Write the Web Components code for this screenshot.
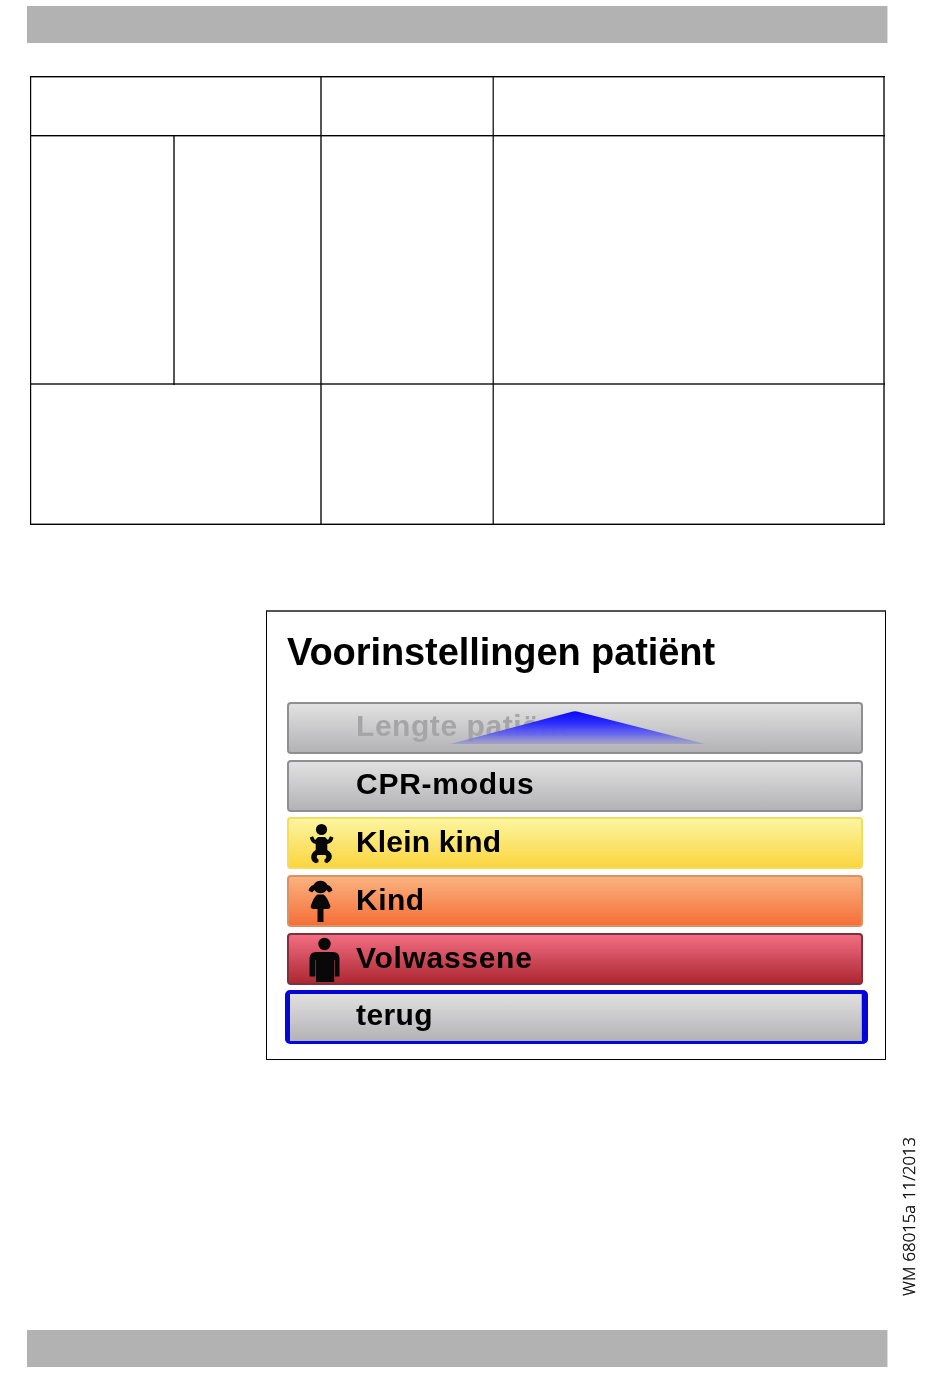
<!DOCTYPE html>
<html lang="nl">
<head>
<meta charset="utf-8">
<title>Voorinstellingen patiënt</title>
<style>
html,body{margin:0;background:#fff}
body{width:950px;height:1381px;overflow:hidden;font-family:"Liberation Sans",Arial,sans-serif;color:#000}
</style>
</head>
<body>
<manual-page>
  <page-band slot="header"></page-band>
  <ruled-table></ruled-table>
  <device-screen slot="screen" heading="Voorinstellingen patiënt">
    <menu-item tone="grey" disabled style="--track:.55px"><span>Lengte patiënt</span><scroll-arrow slot="overlay"></scroll-arrow></menu-item>
    <menu-item tone="grey" style="--track:.75px"><span>CPR-modus</span></menu-item>
    <menu-item tone="yellow" style="margin-top:-1px;--track:.18px;--shift:-1px"><person-icon slot="icon" kind="infant"></person-icon><span>Klein kind</span></menu-item>
    <menu-item tone="orange" style="--track:.5px;--shift:-1px"><person-icon slot="icon" kind="child"></person-icon><span>Kind</span></menu-item>
    <menu-item tone="red" style="--track:.7px;--shift:-1px"><person-icon slot="icon" kind="adult"></person-icon><span>Volwassene</span></menu-item>
    <menu-item tone="grey" selected style="--track:.4px"><span>terug</span></menu-item>
  </device-screen>
  <doc-code slot="code">WM 68015a 11/2013</doc-code>
  <page-band slot="footer"></page-band>
</manual-page>
<script>
const define = (name, html, setup) => {
  const template = document.createElement('template');
  template.innerHTML = html;
  customElements.define(name, class extends HTMLElement {
    constructor() {
      super();
      this.attachShadow({mode: 'open'}).append(template.content.cloneNode(true));
      if (setup) setup(this, this.shadowRoot);
    }
  });
};

define('manual-page', `<style>
:host{display:flex;flex-direction:column;box-sizing:border-box;width:950px;height:1381px;padding:6px 0 0 27px}
.table{margin:33px 0 0 3px}
.lower{display:grid;grid-template-columns:620px 1fr;margin:85px 0 0 239px;height:720px}
.code{display:flex;align-items:flex-end;padding:0 0 34px 12px}
</style>
<slot name="header"></slot>
<div class="table"><slot></slot></div>
<div class="lower"><slot name="screen"></slot><div class="code"><slot name="code"></slot></div></div>
<slot name="footer"></slot>`);

define('page-band', `<style>:host{display:block;box-sizing:border-box;width:861px;height:37px;flex:none;background:#b2b2b2;border-right:1px solid #dcdcdc}</style>`);

/* Table whose rules occupy their own two-pixel grid tracks. */
define('ruled-table', `<style>
:host{display:grid;width:855px;height:449px;
 grid-template-columns:2px 141px 2px 145px 2px 170px 2px 389px 2px;
 grid-template-rows:2px 57px 2px 246px 2px 138px 2px}
i{background:#555;mix-blend-mode:multiply}
.first{background:linear-gradient(#000 50%,#999 50%)}
.last{background:linear-gradient(#999 50%,#000 50%)}
.left{background:linear-gradient(90deg,#000 50%,#ccc 50%)}
.mid{background:linear-gradient(90deg,#999 50%,#333 50%)}
</style>
<i style="grid-area:3/3/6/4"></i>
<i style="grid-area:1/5/8/6"></i>
<i class="mid" style="grid-area:1/7/8/8"></i>
<i style="grid-area:1/9/8/10"></i>
<i class="left" style="grid-area:1/1/8/2"></i>
<i class="first" style="grid-area:1/1/2/10"></i>
<i class="first" style="grid-area:3/1/4/10"></i>
<i style="grid-area:5/1/6/10"></i>
<i class="last" style="grid-area:7/1/8/10"></i>`);

define('device-screen', `<style>
:host{display:block;box-sizing:border-box;width:620px;height:450px;border:1px solid #000;border-top:2px solid #555}
h1{margin:0;padding:18px 0 0 20px;font-size:38px;line-height:44px;font-weight:bold;letter-spacing:-.08px;white-space:nowrap}
.items{display:flex;flex-direction:column;gap:6px;padding:28px 0 0 20px}
</style><h1></h1><div class="items"><slot></slot></div>`,
(host, root) => { root.querySelector('h1').textContent = host.getAttribute('heading'); });

define('menu-item', `<style>
:host{position:relative;display:flex;align-items:center;box-sizing:border-box;width:576px;height:52px;flex:none;
 border:2px solid var(--edge);border-radius:4px;background:linear-gradient(var(--top),var(--bottom));background-origin:border-box;
 font-size:30px;line-height:34px;font-weight:bold;letter-spacing:var(--track);white-space:nowrap}
:host([tone=grey]){--top:#e3e3e3;--bottom:#b1b1b4;--edge:#8f8f92}
:host([tone=yellow]){--top:#fbf6a4;--bottom:#fbd43b;--edge:#f4dc60}
:host([tone=orange]){--top:#f9b583;--bottom:#f66c35;--edge:#d99363}
:host([tone=red]){--top:#f57085;--bottom:#aa252f;--edge:#7e303d}
:host([disabled]){color:#a5a5a7}
:host([selected]){--edge:#a8a8ab}
:host([selected])::after{content:"";position:absolute;left:-4px;top:-3px;width:572px;height:47px;
 border:solid #0505d8;border-width:4px 6px 3px 5px;border-radius:5px}
.icon{width:67px;height:48px;flex:none}
.label{position:relative;top:var(--shift,-2px)}
</style><div class="icon"><slot name="icon"></slot></div><div class="label"><slot></slot></div><slot name="overlay"></slot>`);

define('scroll-arrow', `<style>
:host{position:absolute;left:160px;top:7px;width:258px;height:34px}svg{display:block}
</style><svg width="258" height="34" viewBox="0 0 258 34"><defs><linearGradient id="g" x1="0" y1="0" x2="0" y2="1">
<stop offset="0" stop-color="#0909f2"/><stop offset=".35" stop-color="#2a2aff"/><stop offset=".72" stop-color="#6666ec" stop-opacity=".93"/><stop offset="1" stop-color="#9292c8" stop-opacity=".6"/></linearGradient></defs>
<path d="M122 1Q126-.5 130 1L256 33H1Z" fill="url(#g)"/></svg>`);

const figures = {
  infant: '<circle cx="32.500" cy="10.500" r="5.600"/><path d="M20.800 18.500L24 17.300 26 21 29 18H36L39 21 41 17.300 44.500 18.500Q43.500 24 38.300 25V31Q44 34 42.500 39.500 41 43 38 44.300L35.500 43V40.500Q38.500 38.500 36.500 36H28.500Q26.500 38.500 29.500 40.500V43L27 44.300Q23 43 22.300 39.500 21.500 34 26.700 31V25Q22 24 20.800 18.500Z"/>',
  child: '<path d="M24.500 8Q27 3.800 31.500 3.800T38.500 8Q42.500 9 43.500 13.500L40 15.500 37.500 13Q35.500 16.200 31.500 16.200T25.500 13L23 15.500 19.500 13.500Q20.500 9 24.500 8ZM28.500 17.500H34.500Q38 19.500 41.500 29.500 41 32 38.500 32H34.500V45H28.500V32H24.500Q22 32 21.500 29.500 25 19.500 28.500 17.500Z"/>',
  adult: '<circle cx="35.500" cy="9" r="6.200"/><path d="M27 17H44Q50 17 50.500 23V41.500H46V25H45.200V47H27V25H26V41.500H20.500V23Q21 17 27 17Z"/><path d="M45.600 25V41M26.500 25V41" stroke="#67303a" stroke-width="1"/>'
};
define('person-icon', `<style>:host{display:block}svg{display:block;fill:#080808}</style>
<svg width="67" height="48" viewBox="0 0 67 48"></svg>`,
(host, root) => { root.querySelector('svg').innerHTML = figures[host.getAttribute('kind')]; });

define('doc-code', `<style>
:host{display:block;writing-mode:vertical-rl;transform:rotate(180deg);width:22px;line-height:22px;
 font-family:"Open Sans","Noto Sans",sans-serif;font-size:16.600px;font-weight:350;letter-spacing:.03px;word-spacing:1px;white-space:nowrap;-webkit-text-stroke:.35px #000}
</style><slot></slot>`);
</script>
</body>
</html>
